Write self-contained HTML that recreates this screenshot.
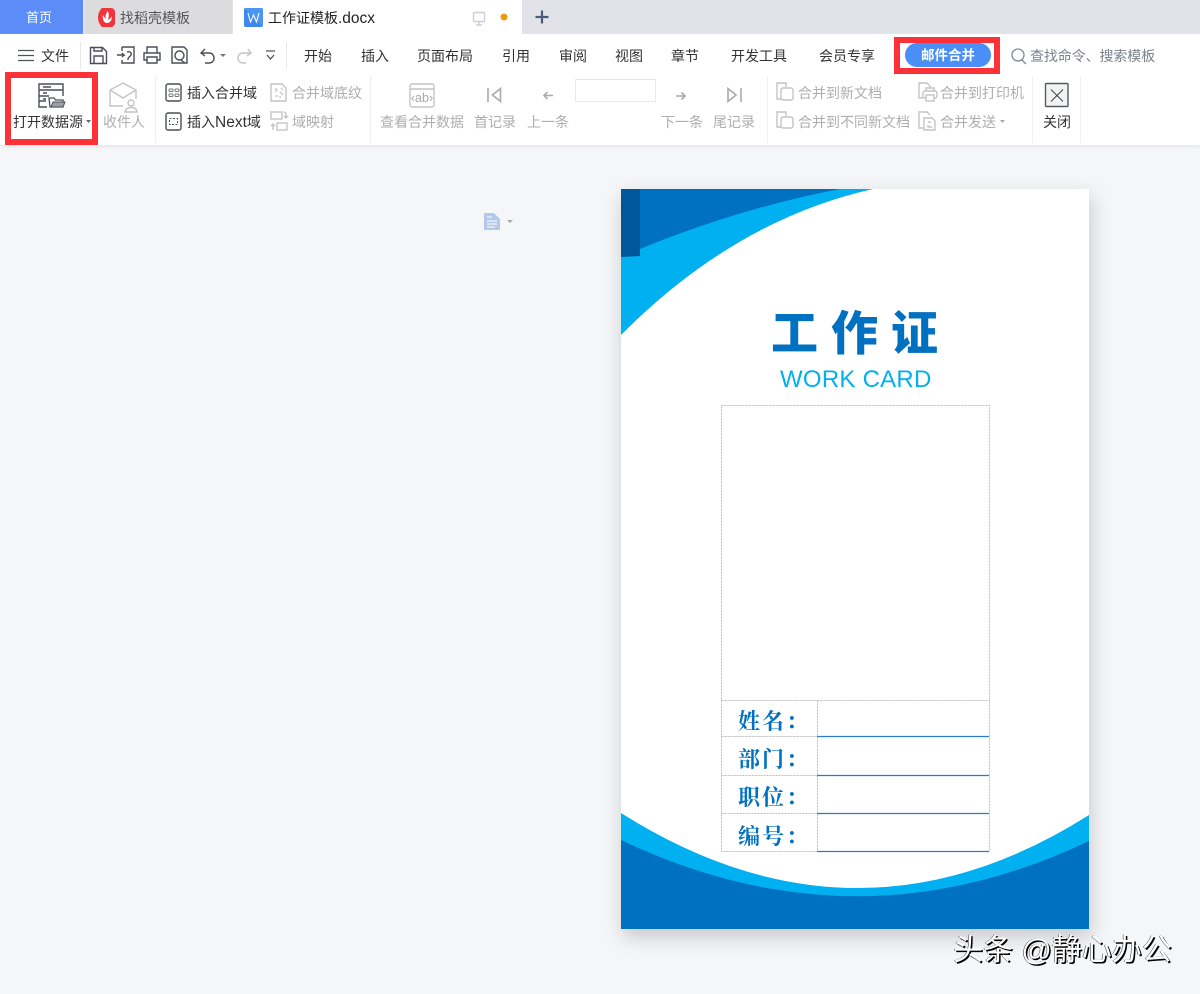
<!DOCTYPE html>
<html lang="zh-CN"><head><meta charset="utf-8"><title>工作证模板.docx</title>
<style>
html,body{margin:0;padding:0;width:1200px;height:994px;overflow:hidden;background:#f5f6f8}
body{position:relative;font-family:"Liberation Sans","Noto Sans CJK SC",sans-serif;font-size:14px;color:#333}
.t{position:absolute;line-height:20px;white-space:nowrap;height:20px}
.g{color:#aeaeae}
.b{position:absolute}
svg{position:absolute;left:0;top:0}
.ic{fill:none;stroke:#4a4f57;stroke-width:1.4}
.ig{fill:none;stroke:#c4c4c4;stroke-width:1.4}
.l{position:absolute;font-family:"Liberation Serif","Noto Serif CJK SC",serif;font-weight:700;font-size:22px;color:#0070c0;line-height:30px;letter-spacing:2px;left:738px;white-space:nowrap}
</style></head><body>
<div class="b" style="left:0;top:0;width:1200px;height:34px;background:#e1e3e8"></div>
<div class="b" style="left:0;top:0;width:83px;height:34px;background:#5b8cf7"></div>
<div class="b" style="left:85px;top:0;width:147px;height:34px;background:#dcdcdf"></div>
<div class="b" style="left:233px;top:0;width:289px;height:34px;background:#fff"></div>
<div class="b" style="left:0;top:34px;width:1200px;height:111px;background:#fff;box-shadow:0 2px 3px #e6e7ea"></div>

<div class="t" style="left:26px;top:8px;color:#fff;font-size:13px">首页</div>
<div class="t" style="left:120px;top:8px;color:#555;font-size:14px">找稻壳模板</div>
<div class="t" style="left:268px;top:8px;color:#222;font-size:14px">工作证模板<span style="font-size:15.5px">.docx</span></div>

<div class="t" style="left:41px;top:46px">文件</div>
<div class="t" style="left:304px;top:46px">开始</div>
<div class="t" style="left:361px;top:46px">插入</div>
<div class="t" style="left:417px;top:46px">页面布局</div>
<div class="t" style="left:502px;top:46px">引用</div>
<div class="t" style="left:559px;top:46px">审阅</div>
<div class="t" style="left:615px;top:46px">视图</div>
<div class="t" style="left:671px;top:46px">章节</div>
<div class="t" style="left:731px;top:46px">开发工具</div>
<div class="t" style="left:819px;top:46px">会员专享</div>
<div class="t" style="left:1030px;top:46px;color:#7a828e;letter-spacing:-.1px">查找命令、搜索模板</div>

<div class="b" style="left:905px;top:43px;width:86px;height:24px;border-radius:12px;background:#4a8ff5"></div>
<div class="t" style="left:921px;top:46px;color:#fff;font-size:13.5px;font-weight:700">邮件合并</div>

<div class="t" style="left:13px;top:112px">打开数据源</div>
<div class="t g" style="left:103px;top:112px">收件人</div>
<div class="t" style="left:187px;top:83px">插入合并域</div>
<div class="t" style="left:187px;top:112px">插入<span style="font-size:15.5px">Next</span>域</div>
<div class="t g" style="left:292px;top:83px">合并域底纹</div>
<div class="t g" style="left:292px;top:112px">域映射</div>
<div class="t g" style="left:380px;top:112px">查看合并数据</div>
<div class="t g" style="left:474px;top:112px">首记录</div>
<div class="t g" style="left:527px;top:112px">上一条</div>
<div class="t g" style="left:661px;top:112px">下一条</div>
<div class="t g" style="left:713px;top:112px">尾记录</div>
<div class="t g" style="left:798px;top:83px">合并到新文档</div>
<div class="t g" style="left:798px;top:112px">合并到不同新文档</div>
<div class="t g" style="left:940px;top:83px">合并到打印机</div>
<div class="t g" style="left:940px;top:112px">合并发送</div>
<div class="t" style="left:1043px;top:112px">关闭</div>

<svg width="1200" height="994" viewBox="0 0 1200 994">
  <!-- tabs icons -->
  <path d="M102 8h9a4 4 0 0 1 4 4v11a4 4 0 0 1-4 4h-9c-2-2-4-5-4-9.500s2-7.500 4-9.500z" fill="#f0343c"/>
  <path d="M103 15c-1 4 1 8 4 8 3 0 5-3 5-7-1 2-2 3-4 4 1-3 1-6 0-9-2 2-3 5-2 8-1-1-2-2-3-4z" fill="#fff"/>
  <rect x="244" y="8" width="19" height="19" rx="2" fill="#3d88ee"/>
  <path d="M244 8h19v19z" fill="#5ea2f5" opacity=".5"/>
  <path d="M248 13l2.500 9 3-7 3 7 2.500-9" fill="none" stroke="#fff" stroke-width="1.100"/>
  <g fill="none" stroke="#c9cfdf" stroke-width="1.400"><rect x="473.500" y="12.500" width="11" height="9" rx="1"/><path d="M479 22v3M476 25h6"/></g>
  <circle cx="504" cy="17" r="3.500" fill="#ee9a10"/>
  <path d="M542 10.500v13M535.500 17h13" stroke="#4d5a78" stroke-width="2.200"/>
  <!-- row 1 icons -->
  <path d="M18 50.500h16M18 55.500h16M18 60.500h16" stroke="#50555c" stroke-width="1.300"/>
  <rect x="80" y="42" width="1" height="27" fill="#e8e8e8"/>
  <rect x="286" y="42" width="1" height="27" fill="#e8e8e8"/>
  <path class="ic" d="M90.500 47.500h12l4 4v12h-16zM94 63v-7h9v7M94 48v3h8v-3"/>
  <path class="ic" d="M122 47h12v16h-12v-3M122 47v4M117 55h7l-2-2M124 55l-2 2M127 52c3-1 5 1 4 3s-3 2-3 4v1"/>
  <path class="ic" d="M147 53v-6h10v6M147 60h-3v-7h16v7h-3M147 57h10v6h-10z"/>
  <path class="ic" d="M172 47h12l3 3v13h-15zM181 60l4 3"/><circle class="ic" cx="179.500" cy="55.500" r="4.500"/>
  <path class="ic" d="M205 49l-4 4 4 3M201 53h8c3 0 5 2 5 5s-2 5-5 5h-4"/>
  <path d="M220 54h6l-3 3z" fill="#777"/>
  <path class="ig" d="M248 49l3 4-4 3M251 53h-8c-3 0-5 2-5 5s2 5 5 5h3"/>
  <path d="M266 51h9M267 55l3.500 4 3.500-4" fill="none" stroke="#555" stroke-width="1.300"/>
  <circle cx="1018" cy="55" r="6" fill="none" stroke="#7f8792" stroke-width="1.300"/><path d="M1022 60l4 4" stroke="#7f8792" stroke-width="1.300"/>
  <!-- ribbon dividers -->
  <g fill="#f0f0f0"><rect x="155" y="76" width="1" height="67"/><rect x="370" y="76" width="1" height="67"/><rect x="767" y="76" width="1" height="67"/><rect x="1032" y="76" width="1" height="67"/><rect x="1080" y="76" width="1" height="67"/></g>
  <!-- open data source -->
  <path class="ic" d="M47 107H39V84h24v12M39 90h24M39 96h10M39 101h7M43 87h8M43 93h4M43 99h3"/>
  <path d="M50 107l-1-9h5l1.500 2H63v7z" fill="#fff" stroke="#4a4f57" stroke-width="1.300"/>
  <path d="M51 107l2-5h12l-2 5z" fill="#9aa0a8" stroke="#4a4f57" stroke-width="1"/>
  <path d="M86 120h5l-2.500 3z" fill="#666"/>
  <!-- recipient -->
  <path class="ig" d="M110 90l13-7 13 7v9M110 90v16h13M110 90l13 8 13-8"/>
  <circle class="ig" cx="131" cy="103" r="3"/><path class="ig" d="M125 112c0-6 12-6 12 0z"/>
  <!-- insert field -->
  <rect class="ic" x="166" y="84" width="15" height="17" rx="2"/>
  <g fill="none" stroke="#777" stroke-width="1"><rect x="169" y="89" width="4" height="2.500" rx="1"/><rect x="175" y="89" width="4" height="2.500" rx="1"/><rect x="169" y="94" width="4" height="2.500" rx="1"/><rect x="175" y="94" width="4" height="2.500" rx="1"/></g>
  <rect class="ic" x="166" y="113" width="15" height="17" rx="2"/>
  <rect x="169.500" y="118.500" width="8" height="6" fill="none" stroke="#4a4f57" stroke-dasharray="2 1.500"/>
  <path class="ig" d="M271 84h11l4 4v13h-15z"/>
  <path d="M275 88l2 2-2 2M281 88l2 2M280 92l3 3M275 96h3M279 97l2 0" stroke="#c4c4c4" fill="none" stroke-width="1.200"/>
  <rect class="ig" x="271" y="112" width="11" height="7"/><rect class="ig" x="277" y="123" width="10" height="7"/>
  <path class="ig" d="M284 112c2 0 2 3 2 5M284 116l2 2 2-2M273 130v-6M271 126l2-2 2 2"/>
  <!-- ab -->
  <rect class="ig" x="410" y="84" width="24" height="23" rx="2" stroke-width="1.600"/>
  <path class="ig" d="M410 89h24"/>
  <text x="422" y="102" font-size="12.500" fill="#a8a8a8" text-anchor="middle" font-family="Liberation Sans">‹ab›</text>
  <!-- nav -->
  <path d="M488 88v14" stroke="#aaa" stroke-width="1.600"/><path d="M500.500 88.500v13l-8-6.500z" fill="none" stroke="#aaa" stroke-width="1.600"/>
  <path d="M544 95.500h9M547.500 92l-3.500 3.500 3.500 3.500" fill="none" stroke="#aaa" stroke-width="1.600"/>
  <rect x="575.500" y="79.500" width="80" height="22" fill="#fff" stroke="#e8e8e8"/>
  <path d="M676 96h9M681.500 92.500l3.500 3.500-3.500 3.500" fill="none" stroke="#aaa" stroke-width="1.600"/>
  <path d="M741 88v14" stroke="#aaa" stroke-width="1.600"/><path d="M728 88.500v13l8-6.500z" fill="none" stroke="#aaa" stroke-width="1.600"/>
  <!-- merge icons -->
  <g class="ig"><path d="M781 99h-4V83h9v4"/><rect x="781" y="88" width="12" height="12" rx="2" fill="#fff"/></g>
  <g class="ig"><path d="M781 127h-4V112h9v4"/><rect x="781" y="117" width="12" height="11" rx="2" fill="#fff"/></g>
  <g class="ig"><path d="M923 98h-4V83h8l3 3v3"/><path d="M926 91v-3h8v3" fill="#fff"/><rect x="923" y="91" width="14" height="7" rx="2" fill="#fff"/><rect x="926" y="95" width="8" height="6" fill="#fff"/></g>
  <g class="ig"><path d="M923 128h-4v-16h8l3 3"/><path d="M924 118h8l3 3v9h-11z" fill="#fff"/><path d="M928 122h3M928 125v2h4"/></g>
  <path d="M1000 120h5l-2.500 3z" fill="#aaa"/>
  <!-- close -->
  <rect x="1045.500" y="83.500" width="22.500" height="23" rx="1" fill="#f2f3f5" stroke="#555b63" stroke-width="1.400"/>
  <path d="M1051 89.500l12 12M1063 89.500l-12 12" stroke="#444" stroke-width="1"/>
  <!-- margin doc icon -->
  <path d="M484 213h10l6 6v11h-16z" fill="#b4c9ea"/>
  <path d="M487 217h5M487 221h10M487 224h10M487 227h8" stroke="#fff" stroke-width="1"/>
  <path d="M507 220h6l-3 3z" fill="#aaa"/>
</svg>

<!-- red highlight boxes -->
<div class="b" style="left:5px;top:72px;width:81px;height:61px;border:6px solid #fb3338"></div>
<div class="b" style="left:894px;top:37px;width:94px;height:25px;border:6px solid #fb3338"></div>

<!-- document -->
<div class="b" style="left:621px;top:189px;width:468px;height:740px;background:#fff;box-shadow:2px 8px 18px rgba(120,125,135,.38)"></div>
<svg width="1200" height="994" viewBox="0 0 1200 994">
  <path d="M621 189H873Q735 220 621 335z" fill="#00b0f0"/>
  <path d="M621 189H840Q730 210 621 257z" fill="#0070c0"/>
  <path d="M621 189h19v67l-19 1z" fill="#00589b"/>
  <path d="M621 813Q857 962 1089 815V929H621z" fill="#00b0f0"/>
  <path d="M621 840Q857 952 1089 841V929H621z" fill="#0070c0"/>
  <g fill="none" stroke="#bdbdbd" stroke-width="1" stroke-dasharray="2 1">
    <path d="M721.500 405.500H989.500V851.500H721.500zM721.500 700.500H989.500M721.500 736.500H817M721.500 775.500H817M721.500 813.500H817M817.500 700.500V851.500"/>
  </g>
  <path d="M817 736.500H989M817 775.500H989M817 813.500H989M817 851.500H989" stroke="#2a7dc4" stroke-width="1.200"/>
</svg>
<div class="t" style="left:771px;top:302px;height:56px;line-height:56px;font-size:47px;font-weight:900;color:#0070c0;letter-spacing:13px;font-family:'Noto Sans CJK SC',sans-serif">工作证</div>
<div class="t" style="left:780px;top:365px;height:30px;line-height:30px;font-size:24px;color:#00b0f0;letter-spacing:.25px">WORK CARD</div>
<div class="l" style="top:707px">姓名：</div>
<div class="l" style="top:745px">部门：</div>
<div class="l" style="top:783px">职位：</div>
<div class="l" style="top:822px">编号：</div>

<div class="t" style="left:953px;top:932px;height:38px;line-height:38px;font-size:30px;color:#fff;text-shadow:1.500px 1.500px 0 #000,-.5px 0 0 #222;font-family:'Liberation Sans','Noto Sans CJK SC',sans-serif">头条 @静心办公</div>
</body></html>
